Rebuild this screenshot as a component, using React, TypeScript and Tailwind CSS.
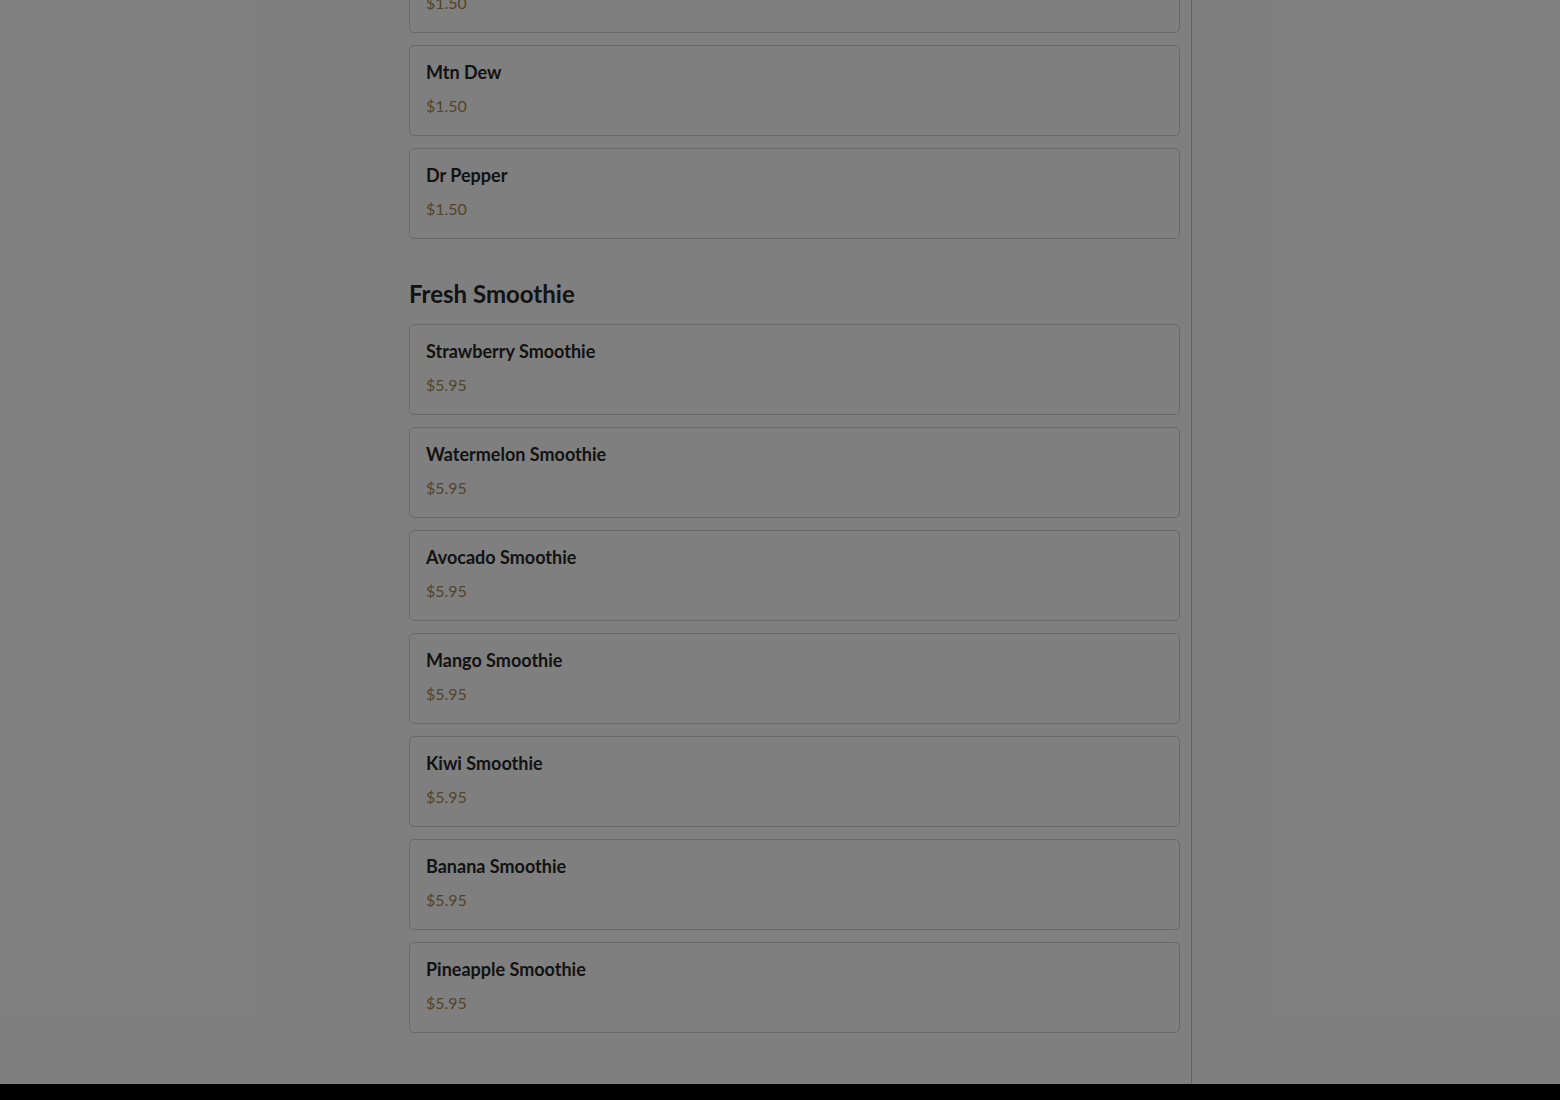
import React from "react";

type Item = { name: string; price: string };

const sodas: Item[] = [
  { name: "Sprite", price: "$1.50" },
  { name: "Mtn Dew", price: "$1.50" },
  { name: "Dr Pepper", price: "$1.50" },
];

const smoothies: Item[] = [
  { name: "Strawberry Smoothie", price: "$5.95" },
  { name: "Watermelon Smoothie", price: "$5.95" },
  { name: "Avocado Smoothie", price: "$5.95" },
  { name: "Mango Smoothie", price: "$5.95" },
  { name: "Kiwi Smoothie", price: "$5.95" },
  { name: "Banana Smoothie", price: "$5.95" },
  { name: "Pineapple Smoothie", price: "$5.95" },
];

function MenuCard({ item }: { item: Item }) {
  return (
    <div className="border border-[#d2d2d2] rounded-[5px] bg-white px-4 pt-3 pb-[17px]">
      <h3 className="text-lg leading-7 font-bold text-[#262626]">{item.name}</h3>
      <p className="mt-2 text-base leading-6 text-[#a88a52]">{item.price}</p>
    </div>
  );
}

export default function App() {
  return (
    <div
      className="relative h-screen flex flex-col bg-white overflow-hidden"
      style={{ fontFamily: "Lato, 'Noto Sans', sans-serif" }}
    >
      <div className="flex-1 flex min-h-0">
        <div className="w-[409px] shrink-0" />
        <main className="w-[783px] shrink-0 pr-[11px] border-r border-[#c4c4c4]">
          {/* scrolled list, top card is cut off */}
          <div className="-mt-[58px]">
            <div className="flex flex-col gap-3">
              {sodas.map((s) => (
                <MenuCard key={s.name} item={s} />
              ))}
            </div>
            <h2 className="mt-[39px] mb-[14px] text-2xl leading-8 font-bold text-[#262626]">
              Fresh Smoothie
            </h2>
            <div className="flex flex-col gap-3">
              {smoothies.map((s) => (
                <MenuCard key={s.name} item={s} />
              ))}
            </div>
          </div>
        </main>
        <div className="flex-1" />
      </div>
      <div className="h-4 bg-black shrink-0" />

      {/* dimmed backdrop */}
      <div className="absolute inset-x-0 top-0 bottom-4 bg-black/50" />
    </div>
  );
}
